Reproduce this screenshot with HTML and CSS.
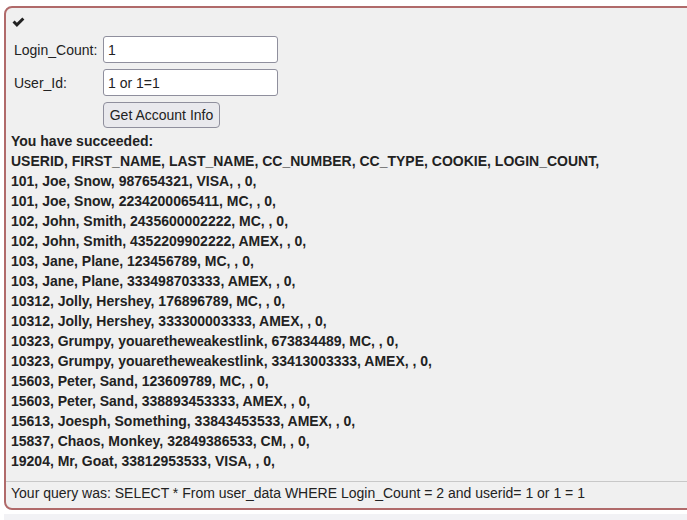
FILE: index.html
```html
<!DOCTYPE html>
<html>
<head>
<meta charset="utf-8">
<link rel="stylesheet" href="styles.css">
</head>
<body>
<div class="panel">
  <div class="check">
    <svg width="13" height="11" viewBox="0 0 13 11"><path d="M0.5 5.6 L2.6 3.5 L4.9 5.8 L10.3 0.4 L12.4 2.5 L4.9 10 Z" fill="#222"/></svg>
  </div>
  <form class="form">
    <label class="lbl">Login_Count:</label>
    <input class="inp" type="text" value="1">
    <label class="lbl">User_Id:</label>
    <input class="inp" type="text" value="1 or 1=1">
    <span></span>
    <div><button type="button" class="btn">Get Account Info</button></div>
  </form>
  <div class="result">
    <div>You have succeeded:</div>
    <div>USERID, FIRST_NAME, LAST_NAME, CC_NUMBER, CC_TYPE, COOKIE, LOGIN_COUNT, </div>
    <div>101, Joe, Snow, 987654321, VISA, , 0, </div>
    <div>101, Joe, Snow, 2234200065411, MC, , 0, </div>
    <div>102, John, Smith, 2435600002222, MC, , 0, </div>
    <div>102, John, Smith, 4352209902222, AMEX, , 0, </div>
    <div>103, Jane, Plane, 123456789, MC, , 0, </div>
    <div>103, Jane, Plane, 333498703333, AMEX, , 0, </div>
    <div>10312, Jolly, Hershey, 176896789, MC, , 0, </div>
    <div>10312, Jolly, Hershey, 333300003333, AMEX, , 0, </div>
    <div>10323, Grumpy, youaretheweakestlink, 673834489, MC, , 0, </div>
    <div>10323, Grumpy, youaretheweakestlink, 33413003333, AMEX, , 0, </div>
    <div>15603, Peter, Sand, 123609789, MC, , 0, </div>
    <div>15603, Peter, Sand, 338893453333, AMEX, , 0, </div>
    <div>15613, Joesph, Something, 33843453533, AMEX, , 0, </div>
    <div>15837, Chaos, Monkey, 32849386533, CM, , 0, </div>
    <div>19204, Mr, Goat, 33812953533, VISA, , 0, </div>
  </div>
  <div class="query">Your query was: SELECT * From user_data WHERE Login_Count = 2 and userid= 1 or 1 = 1</div>
</div>
<div class="next"></div>
</body>
</html>
```
FILE: styles.css
```css
html, body {
  margin: 0;
  padding: 0;
  background: #ffffff;
  overflow: hidden;
}
body {
  padding: 6px 0 0 4px;
  font-family: "Liberation Sans", Arial, sans-serif;
  font-size: 14px;
  color: #222;
}
.panel {
  width: 720px;
  border: 2px solid #b06a6a;
  border-radius: 8px;
  background: #f0f0f0;
  padding: 0 0 4px 0;
}
.check {
  height: 28px;
  padding: 9px 0 0 6px;
  box-sizing: border-box;
}
.check svg { display: block; }
.form {
  display: grid;
  grid-template-columns: 89px 175px;
  row-gap: 6px;
  padding-left: 8px;
  align-items: center;
  margin: 0;
}
.lbl {
  color: #222;
}
.inp {
  box-sizing: border-box;
  height: 27px;
  width: 175px;
  border: 1px solid #8f8f9d;
  border-radius: 3px;
  background: #fff;
  font-family: "Liberation Sans", Arial, sans-serif;
  font-size: 14px;
  color: #222;
  padding: 0 4px;
  margin: 0;
}
.btn {
  box-sizing: border-box;
  height: 26px;
  width: 117px;
  border: 1px solid #8f8f9d;
  border-radius: 4px;
  background: #e9e9ed;
  font-family: "Liberation Sans", Arial, sans-serif;
  font-size: 14px;
  color: #222;
  padding: 0;
  margin: 0;
  display: block;
}
.result {
  margin-top: 3px;
  padding-left: 5px;
  font-weight: bold;
  line-height: 20px;
}
.result div {
  white-space: pre;
}
.query {
  margin-top: 10px;
  border-top: 1px solid #c8c8c8;
  padding: 0 0 0 5px;
  line-height: 22px;
}
.next {
  margin-top: 4px;
  height: 20px;
  background: #f2f2f5;
}
```
